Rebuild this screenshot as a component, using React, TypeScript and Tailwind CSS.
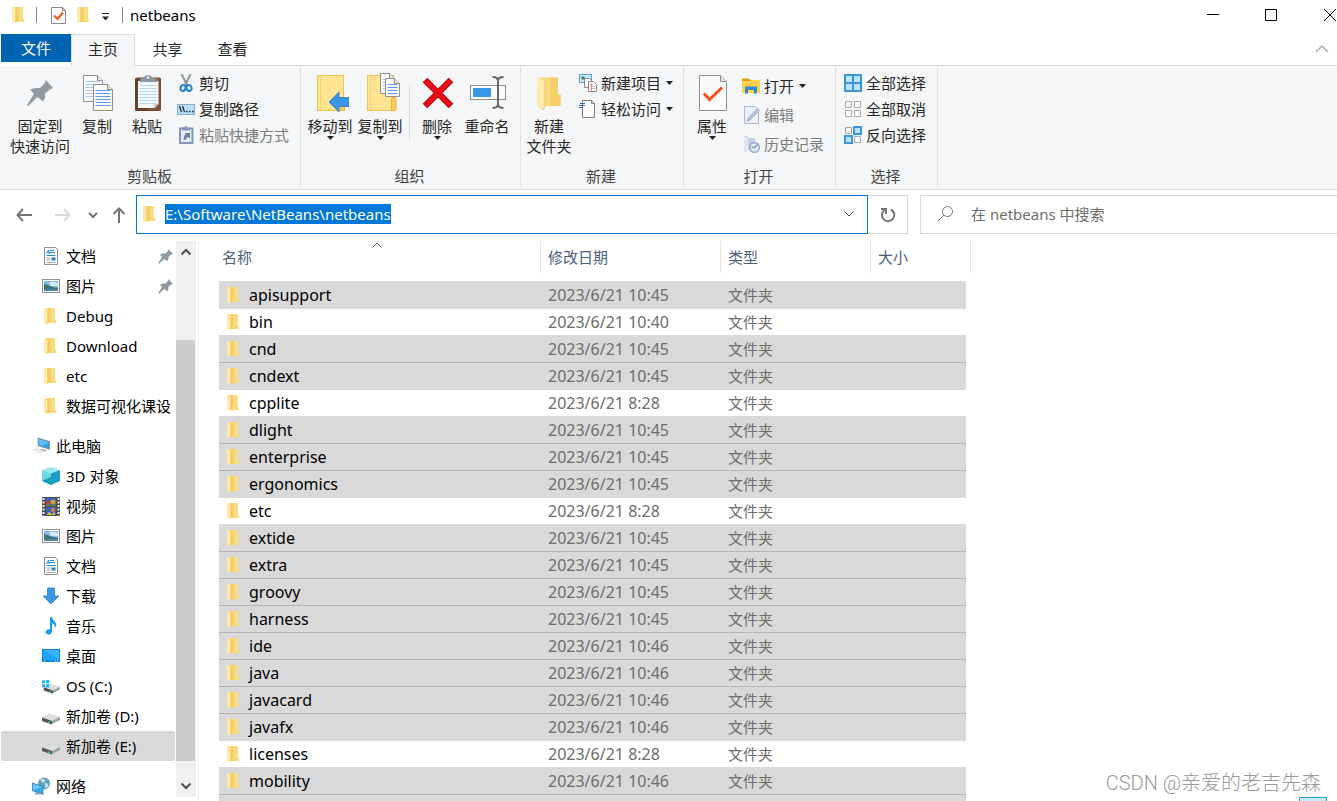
import React, { useEffect, useRef } from 'react';

type Row = { name: string; date: string; selected: boolean };
type Icon = () => React.ReactElement;

const FILES: Row[] = [
  { name: 'apisupport', date: '2023/6/21 10:45', selected: true },
  { name: 'bin', date: '2023/6/21 10:40', selected: false },
  { name: 'cnd', date: '2023/6/21 10:45', selected: true },
  { name: 'cndext', date: '2023/6/21 10:45', selected: true },
  { name: 'cpplite', date: '2023/6/21 8:28', selected: false },
  { name: 'dlight', date: '2023/6/21 10:45', selected: true },
  { name: 'enterprise', date: '2023/6/21 10:45', selected: true },
  { name: 'ergonomics', date: '2023/6/21 10:45', selected: true },
  { name: 'etc', date: '2023/6/21 8:28', selected: false },
  { name: 'extide', date: '2023/6/21 10:45', selected: true },
  { name: 'extra', date: '2023/6/21 10:45', selected: true },
  { name: 'groovy', date: '2023/6/21 10:45', selected: true },
  { name: 'harness', date: '2023/6/21 10:45', selected: true },
  { name: 'ide', date: '2023/6/21 10:46', selected: true },
  { name: 'java', date: '2023/6/21 10:46', selected: true },
  { name: 'javacard', date: '2023/6/21 10:46', selected: true },
  { name: 'javafx', date: '2023/6/21 10:46', selected: true },
  { name: 'licenses', date: '2023/6/21 8:28', selected: false },
  { name: 'mobility', date: '2023/6/21 10:46', selected: true },
];

/* ---------- small icons ---------- */

const Folder = () => (
  <svg width="14" height="18" viewBox="1 0 14 18" className="shrink-0">
    <path d="M3 1h9v12h1v3H4z" fill="#f6d06b" />
    <path d="M8 1h4v12h1v3H8z" fill="#fadc80" />
    <path d="M1 1h2l2 3v11l-1 2.500L1 16z" fill="#ffe9a9" />
    <path d="M5 4v11l-1 1" stroke="#e9c25c" fill="none" />
  </svg>
);

const CheckDoc = () => (
  <svg width="16" height="19" viewBox="0 0 16 19">
    <path d="M.5 1.500h11l3 3v13H.5z" fill="#fafafa" stroke="#8a8a8a" />
    <path d="M11.500 1.500v3h3" fill="none" stroke="#8a8a8a" />
    <path d="M3 9.500l3.500 3.500 5.500-6.500" fill="none" stroke="#f0561d" strokeWidth="2" />
  </svg>
);

const Scissors = () => (
  <svg width="18" height="18" viewBox="0 0 18 18">
    <path d="M4.500 0L10 11M13.500 0L8 11" stroke="#8f979e" strokeWidth="2" fill="none" />
    <ellipse cx="6" cy="14" rx="2.500" ry="3" transform="rotate(20 6 14)" fill="none" stroke="#1b82c8" strokeWidth="2" />
    <ellipse cx="12" cy="14" rx="2.500" ry="3" transform="rotate(-20 12 14)" fill="none" stroke="#1b82c8" strokeWidth="2" />
  </svg>
);

const CopyPath = () => (
  <svg width="18" height="18" viewBox="0 0 18 18">
    <rect x=".5" y="4.500" width="17" height="10" fill="#b5def8" stroke="#8fa9bd" />
    <path d="M2.500 6l2 6M5.500 6l2 6" stroke="#222" strokeWidth="1.200" />
    <path d="M9 11.500h1.500M12 11.500h1.500M15 11.500h1.500" stroke="#222" strokeWidth="1.500" />
  </svg>
);

const PasteShortcut = () => (
  <svg width="18" height="18" viewBox="0 0 18 18">
    <rect x="3" y="2.500" width="12.500" height="14.500" fill="#e8eefa" stroke="#8496bb" strokeWidth="2" />
    <path d="M5 1.500h8v3H5zM8 0h2v2H8z" fill="#8496bb" />
    <path d="M6.500 13.500c0-3 1-4.500 2.500-5L7.500 7H13v5.500L11.500 11C9.500 11.500 9 12.500 9 14z" fill="#6a7ea8" />
  </svg>
);

const NewItem = () => (
  <svg width="18" height="18" viewBox="0 0 18 18">
    <rect x=".5" y=".5" width="12" height="8" fill="#c9e7f8" stroke="#5f9fc4" />
    <path d="M2.500 2.500h3v3h-3z" fill="#36806f" />
    <path d="M5.500 4.500h5l2 2v7h-7z" fill="#fff" stroke="#888" />
    <path d="M9.500 7.500h5l3 3v7h-8z" fill="#fff" stroke="#888" />
    <path d="M11 10.500h3M11 12.500h5M11 14.500h5" stroke="#e3a9a2" />
    <path d="M12.500 9v8" stroke="#e88" />
  </svg>
);

const EasyAccess = () => (
  <svg width="18" height="18" viewBox="0 0 18 18">
    <path d="M3.500.5h9l3 3v14h-12z" fill="#fff" stroke="#7d7d7d" />
    <path d="M12.500.5v3h3" fill="none" stroke="#7d7d7d" />
    <path d="M1 3.500h5M0 5.500h6M0 7.500h4" stroke="#2b6aa5" />
  </svg>
);

const OpenFolder = () => (
  <svg width="18" height="18" viewBox="0 0 18 18">
    <path d="M0 1.500h7l1.500 2H17V6H0z" fill="#e09f10" />
    <path d="M0 4h8l1.500-1H18v13H0z" fill="#ffcf4f" />
    <path d="M3 16.500V9.500h12v7h-3v-3.500H6v3.500z" fill="#2f8bd9" />
  </svg>
);

const EditDoc = () => (
  <svg width="18" height="18" viewBox="0 0 18 18">
    <path d="M2.500.5h11l3 3v14h-14z" fill="#eaf0fa" stroke="#a9b8d4" />
    <path d="M15.500 2.500L17.500 4.500 8 14l-3 1.500L6.500 12z" fill="#b9c7e2" stroke="#92a5c9" strokeWidth=".800" />
  </svg>
);

const History = () => (
  <svg width="18" height="18" viewBox="0 0 18 18">
    <path d="M2 1h3l1 2h7v12H5l-3 2z" fill="#c3d0e6" />
    <path d="M2 1l4 2v12l-3 2.500-1-1z" fill="#dfe7f4" />
    <circle cx="12.500" cy="12.500" r="4.800" fill="#e6ecf7" stroke="#93a6c8" strokeWidth="1.400" />
    <path d="M12.500 12.500L15.500 9.500M12.500 12.500h-3" fill="none" stroke="#7d92b8" strokeWidth="1.500" />
  </svg>
);

const SelectAll = () => (
  <svg width="18" height="18" viewBox="0 0 18 18">
    <path d="M1 1h16v16H1z" fill="#bfe2fb" stroke="#3a96dd" strokeWidth="2" />
    <path d="M9 1v16M1 9h16" stroke="#3a96dd" strokeWidth="2" />
  </svg>
);

const SelectNone = () => (
  <svg width="18" height="18" viewBox="0 0 18 18" fill="#fafafa" stroke="#a8a8a8">
    <path d="M1.500 1.500h6v6h-6zM10.500 1.500h6v6h-6zM1.500 10.500h6v6h-6zM10.500 10.500h6v6h-6z" />
  </svg>
);

const Invert = () => (
  <svg width="18" height="18" viewBox="0 0 18 18">
    <path d="M1.500 1.500h6v6h-6zM10.500 10.500h6v6h-6z" fill="#fafafa" stroke="#a8a8a8" />
    <path d="M10 1h7v7h-7zM1 10h7v7H1z" fill="#bfe2fb" stroke="#3a96dd" strokeWidth="2" />
  </svg>
);

/* ---------- large ribbon icons ---------- */

const PIN = 'M25 6L32 14L29 15.500L24 19.500L24 24L22 27.500L16.500 23L7 32L6 31L13 20L9 15.500L14 14L19 14L23.500 9.500Z';

const PinBig = () => (
  <svg width="38" height="38" viewBox="0 0 38 38">
    <path d={PIN} fill="#929ba1" />
  </svg>
);

const SmallPin = () => (
  <svg width="15" height="15" viewBox="5 5 28 28" className="mr-0.5 ml-auto">
    <path d={PIN} fill="#8f9aa3" stroke="#8f9aa3" />
  </svg>
);

const Page = ({ x, y, w, h, line }: { x: number; y: number; w: number; h: number; line: string }) => {
  const rows = [];
  for (let ly = y + 6; ly < y + h - 2; ly += 3) rows.push(ly);
  return (
    <g>
      <path d={`M${x} ${y}h${w - 5}l5 5v${h - 5}h${-w}z`} fill="#fcfcfc" stroke="#8f8f8f" />
      <path d={`M${x + w - 5} ${y}v5h5`} fill="#e8e8e8" stroke="#8f8f8f" />
      {rows.map((ly) => (
        <path key={ly} d={`M${x + 2} ${ly}h${w - 4}`} stroke={line} />
      ))}
    </g>
  );
};

const CopyBig = () => (
  <svg width="38" height="38" viewBox="0 0 38 38">
    <Page x={5.5} y={1.5} w={19} h={26} line="#a9c8f4" />
    <Page x={15.5} y={10.5} w={19} h={26} line="#5e97ea" />
  </svg>
);

const PasteBig = () => (
  <svg width="38" height="38" viewBox="0 0 38 38">
    <rect x="7" y="3.500" width="26" height="33.500" rx="1.500" fill="#7c5135" />
    <path d="M7 5v30.500l1.500 1.500H20V5z" fill="#6a4028" />
    <path d="M10 7h20.500v23l-4 4H10z" fill="#f4f9fd" />
    {[11, 14, 17, 20, 23, 26, 29].map((y) => (
      <path key={y} d={`M11 ${y}.500h18`} stroke="#b9d9ee" />
    ))}
    <path d="M30.500 30l-4 4v-4z" fill="#b5c2cc" />
    <path d="M12 8V5l4-1.500c0-3 8-3 8 0L29 5v3z" fill="#8e979c" />
    <circle cx="20" cy="3.500" r="1.500" fill="#d5dadd" />
  </svg>
);

const MoveTo = () => (
  <svg width="38" height="38" viewBox="0 0 38 38">
    <rect x="6.500" y="1.500" width="26" height="35" fill="#ffe391" stroke="#eac54f" />
    <path d="M9.500 2v34" stroke="#f5d475" />
    <path d="M29.500 25h4v11.500h-4z" fill="#f8cf5a" stroke="#e2b53c" />
    <path d="M18 28l10-10v5.500h10v9H28V38z" fill="#3a96e4" stroke="#2b7cc4" strokeWidth=".800" />
  </svg>
);

const CopyTo = () => (
  <svg width="38" height="38" viewBox="0 0 38 38" className="overflow-visible">
    <rect x="6.500" y="1.500" width="26" height="35" fill="#ffe391" stroke="#eac54f" />
    <path d="M9.500 2v34" stroke="#f5d475" />
    <rect x="30.500" y="23.500" width="4.500" height="13" rx="1.500" fill="#f8cf5a" stroke="#e2b53c" />
    <Page x={19.5} y={-0.5} w={14} h={20} line="#a9c8f4" />
    <Page x={24.5} y={4.5} w={14} h={18} line="#5e97ea" />
  </svg>
);

const Delete = () => (
  <svg width="38" height="38" viewBox="0 0 38 38">
    <path d="M7 6l26 26M33 6L7 32" stroke="#b5000b" strokeWidth="6.500" />
    <path d="M7.500 6.500l25 25M32.500 6.500l-25 25" stroke="#e80c16" strokeWidth="5" />
  </svg>
);

const Rename = () => (
  <svg width="38" height="38" viewBox="0 0 38 38">
    <rect x="2.500" y="11.500" width="35" height="14" fill="#fcfcfc" stroke="#8d8d8d" />
    <rect x="5" y="14" width="18" height="9" fill="#3699ea" />
    <path d="M24.500 3c3.500 0 5.500 1 5.500 4 0-3 2-4 5.500-4M24.500 34c3.500 0 5.500-1 5.500-4 0 3 2 4 5.500 4M30 5v27" fill="none" stroke="#686868" strokeWidth="2" />
  </svg>
);

const NewFolder = () => (
  <svg width="38" height="38" viewBox="0 0 38 38">
    <path d="M9 3.500h19v17h2.500V32H13z" fill="#f9d979" />
    <path d="M20 3.500h8v17h2.500V32H20z" fill="#f6cf68" />
    <path d="M7 4l2-.5 6 4.500v25l-2 4-6-4.500z" fill="#ffeab0" />
    <path d="M15 8v24l-2 4" fill="none" stroke="#ecc765" />
  </svg>
);

const Properties = () => (
  <svg width="38" height="38" viewBox="0 0 38 38">
    <path d="M6.500 1.500h21l6 6v29h-27z" fill="#fafafa" stroke="#8f8f8f" />
    <path d="M27.500 1.500v6h6" fill="#e6e6e6" stroke="#8f8f8f" />
    <path d="M11 19.500l5.500 6 12.500-12" fill="none" stroke="#f4511e" strokeWidth="3" />
  </svg>
);

/* ---------- navigation icons ---------- */

const Doc = () => (
  <svg width="18" height="18" viewBox="0 0 18 18">
    <path d="M2.500.5h11l2 2v15h-13z" fill="#fcfcfc" stroke="#8d8d8d" />
    <path d="M8 3.500h4M7 5.500h6M4.500 8.500h9" stroke="#1a8fd6" />
    <path d="M4.500 7l2-4 .5 4" stroke="#1a8fd6" fill="none" />
    <path d="M4.500 11h4M4.500 13h4M4.500 15.500h9" stroke="#a5a5a5" />
    <path d="M9.500 10.500h4v3h-4z" fill="#2f7fb8" />
  </svg>
);

const Picture = () => (
  <svg width="18" height="18" viewBox="0 0 18 18">
    <rect x=".5" y="2.500" width="17" height="13" fill="#fff" stroke="#8f8f8f" />
    <path d="M2 4h14v10H2z" fill="#7db8ea" />
    <path d="M7 6c2-2 5-1 9 0v3H9z" fill="#d5e9f8" />
    <path d="M2 7c3 0 5 3 14 4v3H2z" fill="#3e7274" />
    <path d="M2 12h14v2H2z" fill="#53879f" />
  </svg>
);

const Computer = () => (
  <svg width="19" height="18" viewBox="0 0 19 18">
    <path d="M6 0l13 4v9L6 9z" fill="#7b8a96" />
    <path d="M7 1.500L18 5v6.500L7 8z" fill="#2ea3ee" />
    <path d="M7 1.500L18 5l-8 4-3-1z" fill="#5fbdf7" />
    <path d="M0 13l5-1.500 9 3L9 17z" fill="#cfd4d9" />
    <path d="M2 13l9 3M4 12.500l8 2.500" stroke="#f4f5f6" />
    <path d="M11 12l5 1.500-2 1-5-1.500z" fill="#a3acb4" />
  </svg>
);

const Cube = () => (
  <svg width="18" height="18" viewBox="0 0 18 18">
    <path d="M0 3l9-3 9 3-9 4z" fill="#9be4ee" />
    <path d="M0 3l9 3.500V18l-9-4z" fill="#6fd6e2" />
    <path d="M18 3L9 6.500V18l9-4z" fill="#1d9cc4" />
    <path d="M0 14l9-4v8z" fill="#179fb5" />
  </svg>
);

const Video = () => (
  <svg width="18" height="19" viewBox="0 0 18 19">
    <path d="M0 0h18v19H0z" fill="#4b4b4b" />
    <path d="M1.500 1v18M16.500 1v18" stroke="#f2f2f2" strokeWidth="2" strokeDasharray="2 1.500" />
    <path d="M4 1h10v8H4zM4 10h10v8H4z" fill="#3a62bd" />
    <circle cx="6" cy="6" r="2" fill="#d6442c" />
    <circle cx="11" cy="5" r="2.500" fill="#caa52b" />
    <path d="M4 8h10v1H4z" fill="#4f8b33" />
    <circle cx="11" cy="13" r="2" fill="#e07a2c" />
    <path d="M5 17l2-2 3 2 3-2v3H5z" fill="#d8bc33" />
  </svg>
);

const Download = () => (
  <svg width="18" height="18" viewBox="0 0 18 18">
    <path d="M5.500 1h7v8H17l-8 8-8-8h4.500z" fill="#3a95e3" stroke="#2f80c6" strokeWidth=".800" />
  </svg>
);

const Music = () => (
  <svg width="18" height="18" viewBox="0 0 18 18">
    <path d="M8 0h2c0 4 5 4 4 9-.5 1-1 1.500-1.500 2 1-3-1-4.500-2.500-5v8c0 5-7 4-6.500 1C4 12.500 6.500 12 8 12.500z" fill="#109cef" />
  </svg>
);

const Desktop = () => (
  <svg width="18" height="18" viewBox="0 0 18 18">
    <path d="M0 2h18v13H0z" fill="#0f86dc" />
    <path d="M1 3h16v10z" fill="#37b3ff" />
    <path d="M1 3v10h16z" fill="#1fa3fb" />
    <path d="M2 14h1M13 14h1M15 14h1" stroke="#fff" />
  </svg>
);

const Disk = () => (
  <svg width="18" height="18" viewBox="0 0 18 18">
    <path d="M0 11l7-4 11 3v3l-8 4L0 14z" fill="#9ea1a3" />
    <path d="M0 10.500L8 7l10 3-8 4z" fill="#dcdee0" />
    <path d="M0 10.500l10 3.500v3.500L0 14z" fill="#53585b" />
    <path d="M7 14.500v1.500" stroke="#3bd43b" strokeWidth="2" />
  </svg>
);

const SystemDisk = () => (
  <svg width="20" height="18" viewBox="0 0 20 18">
    <path d="M2 11l7-4 11 3v3l-8 4-10-3z" fill="#9ea1a3" />
    <path d="M2 10.500L10 7l10 3-8 4z" fill="#dcdee0" />
    <path d="M2 10.500l10 3.500v3.500L2 14z" fill="#53585b" />
    <path d="M9 14.500v1.500" stroke="#3bd43b" strokeWidth="2" />
    <path d="M0 3l3.500-.5v3.500H0zM4.500 2.500L8 2v4H4.500zM0 7h3.500v3.500L0 10zM4.500 7H8v4l-3.500-.5z" fill="#12b5ee" />
  </svg>
);

const Network = () => (
  <svg width="18" height="18" viewBox="0 0 18 18">
    <circle cx="12" cy="6.500" r="6" fill="#5f9fc3" />
    <path d="M8 3c2-2 4-1 5 0s-1 3-2 3zM13 6c3 0 4 1 3 4l-3 1z" fill="#bfe0ea" />
    <path d="M0 6l11 3.500v8L0 13.500z" fill="#36a9ee" stroke="#4a7898" strokeWidth=".800" />
    <path d="M1 7l9 3-9 3z" fill="#74caf8" />
    <path d="M3 15.500l5 2-2 .5-4-1.500z" fill="#8a949c" />
  </svg>
);

/* ---------- building blocks ---------- */

const Caret = () => (
  <svg width="7" height="4" viewBox="0 0 7 4">
    <path d="M0 0h7L3.500 4z" fill="#222" />
  </svg>
);

const Chevron = ({ up, color, width = 2 }: { up?: boolean; color: string; width?: number }) => (
  <svg width="12" height="8" viewBox="0 0 12 8" fill="none" stroke={color} strokeWidth={width}>
    {up ? <path d="M1.500 6.500L6 2l4.500 4.500" /> : <path d="M1.500 1.500L6 6l4.500-4.500" />}
  </svg>
);

function BigButton({ icon: I, lines, caret, wide }: { icon: Icon; lines: string[]; caret?: boolean; wide?: boolean }) {
  return (
    <button className={`${wide ? 'w-16' : 'w-[50px]'} flex flex-col items-center pt-2 leading-5 whitespace-nowrap`}>
      <I />
      <span className="mt-1">{lines[0]}</span>
      {lines[1] && <span>{lines[1]}</span>}
      {caret && <Caret />}
    </button>
  );
}

function SmallButton({ icon: I, label, caret, disabled, tall }: { icon: Icon; label: string; caret?: boolean; disabled?: boolean; tall?: boolean }) {
  return (
    <button disabled={disabled} className={`${tall ? 'h-[29px]' : 'h-[26px]'} flex items-center gap-1 whitespace-nowrap disabled:text-[#7b7b7b]`}>
      <I />
      <span className="pr-px">{label}</span>
      {caret && <Caret />}
    </button>
  );
}

function Group({ label, width, children }: { label: string; width: string; children: React.ReactNode }) {
  return (
    <section className={`${width} flex shrink-0 flex-col pb-0.5`}>
      <div className="flex flex-1 flex-col border-r border-[#e0e1e3]">
        <div className="flex flex-1">{children}</div>
        <h2 className="pr-0.5 pb-px text-center leading-5 text-[#444]">{label}</h2>
      </div>
    </section>
  );
}

type NavEntry = { label: string; icon: Icon; pinned?: boolean; root?: boolean; active?: boolean };

const NAV: NavEntry[] = [
  { label: '文档', icon: Doc, pinned: true },
  { label: '图片', icon: Picture, pinned: true },
  { label: 'Debug', icon: Folder },
  { label: 'Download', icon: Folder },
  { label: 'etc', icon: Folder },
  { label: '数据可视化课设', icon: Folder },
  { label: '此电脑', icon: Computer, root: true },
  { label: '3D 对象', icon: Cube },
  { label: '视频', icon: Video },
  { label: '图片', icon: Picture },
  { label: '文档', icon: Doc },
  { label: '下载', icon: Download },
  { label: '音乐', icon: Music },
  { label: '桌面', icon: Desktop },
  { label: 'OS (C:)', icon: SystemDisk },
  { label: '新加卷 (D:)', icon: Disk },
  { label: '新加卷 (E:)', icon: Disk, active: true },
  { label: '网络', icon: Network, root: true },
];

function TitleBar() {
  return (
    <header className="flex h-[34px] shrink-0 items-center pb-1">
      <div className="flex items-center pl-[11px]">
        <Folder />
        <span className="ml-2.5 h-4 w-px bg-[#8a8a8a]" />
        <button aria-label="属性" className="ml-3.5"><CheckDoc /></button>
        <button aria-label="新建文件夹" className="ml-2.5"><Folder /></button>
        <button aria-label="自定义快速访问工具栏" className="ml-2.5 pt-1">
          <svg width="9" height="8" viewBox="0 0 9 8">
            <path d="M1 .5h7" stroke="#222" />
            <path d="M1 3.500h7L4.500 7.500z" fill="#222" />
          </svg>
        </button>
        <span className="ml-3 h-4 w-px bg-[#8a8a8a]" />
        <h1 className="ml-[7px] leading-5 text-black">netbeans</h1>
      </div>
      <div className="ml-auto flex h-full">
        <button aria-label="最小化" className="flex w-[58px] items-center justify-center">
          <svg width="12" height="12" viewBox="0 0 12 12"><path d="M0 5.500h12" stroke="#000" /></svg>
        </button>
        <button aria-label="最大化" className="flex w-[58px] items-center justify-center">
          <svg width="12" height="12" viewBox="0 0 12 12"><path d="M.5.5h11v11H.5z" stroke="#000" fill="none" /></svg>
        </button>
        <button aria-label="关闭" className="flex w-[37px] items-center justify-end">
          <svg width="13" height="12" viewBox="0 0 13 12"><path d="M0 0l12 12M12 0L0 12" stroke="#000" fill="none" /></svg>
        </button>
      </div>
    </header>
  );
}

function Tabs() {
  return (
    <nav className="flex h-8 shrink-0 items-stretch">
      <button className="mb-1 w-[70px] bg-[#0063b1] text-white">文件</button>
      <button className="-mb-px w-16 border border-b-0 border-[#dadbdc] bg-[#f5f6f7] pb-1">主页</button>
      <div className="flex flex-1 border-b border-[#dadbdc]">
        <button className="w-[65px] pb-0.5">共享</button>
        <button className="w-[65px] pb-0.5">查看</button>
        <button aria-label="最小化功能区" className="mr-2 ml-auto pb-0.5">
          <svg width="14" height="9" viewBox="0 0 14 9" fill="none" stroke="#aaa" strokeWidth="1.500"><path d="M1 8l6-6 6 6" /></svg>
        </button>
      </div>
    </nav>
  );
}

function Ribbon() {
  return (
    <div className="-ml-px flex h-[124px] shrink-0 overflow-hidden border-b border-[#dadbdc] bg-[#f5f6f7] pl-px">
      <Group label="剪贴板" width="w-[300px]">
        <div className="flex pl-[7px]">
          <BigButton icon={PinBig} lines={['固定到', '快速访问']} wide />
          <BigButton icon={CopyBig} lines={['复制']} />
          <BigButton icon={PasteBig} lines={['粘贴']} />
        </div>
        <div className="flex flex-col pt-1 pl-[5px]">
          <SmallButton icon={Scissors} label="剪切" />
          <SmallButton icon={CopyPath} label="复制路径" />
          <SmallButton icon={PasteShortcut} label="粘贴快捷方式" disabled />
        </div>
      </Group>
      <Group label="组织" width="w-[220px]">
        <div className="flex pl-1">
          <BigButton icon={MoveTo} lines={['移动到']} caret />
          <BigButton icon={CopyTo} lines={['复制到']} caret />
          <span className="mt-5 mr-0.5 ml-1 h-[55px] w-px bg-[#dcdddf]" />
          <BigButton icon={Delete} lines={['删除']} caret />
          <BigButton icon={Rename} lines={['重命名']} />
        </div>
      </Group>
      <Group label="新建" width="w-[163px]">
        <div className="flex pl-[3px]">
          <BigButton icon={NewFolder} lines={['新建', '文件夹']} />
        </div>
        <div className="flex flex-col pt-1 pl-[5px]">
          <SmallButton icon={NewItem} label="新建项目" caret />
          <SmallButton icon={EasyAccess} label="轻松访问" caret />
        </div>
      </Group>
      <Group label="打开" width="w-[152px]">
        <div className="flex pl-[3px]">
          <BigButton icon={Properties} lines={['属性']} caret />
        </div>
        <div className="flex flex-col pt-[5px] pl-[5px]">
          <SmallButton icon={OpenFolder} label="打开" caret tall />
          <SmallButton icon={EditDoc} label="编辑" disabled tall />
          <SmallButton icon={History} label="历史记录" disabled tall />
        </div>
      </Group>
      <Group label="选择" width="w-[102px]">
        <div className="flex flex-col pt-1 pl-2">
          <SmallButton icon={SelectAll} label="全部选择" />
          <SmallButton icon={SelectNone} label="全部取消" />
          <SmallButton icon={Invert} label="反向选择" />
        </div>
      </Group>
    </div>
  );
}

function AddressRow() {
  const path = useRef<HTMLInputElement>(null);

  useEffect(() => {
    path.current?.focus();
    path.current?.select();
  }, []);

  return (
    <div className="mt-[5px] flex h-[39px] shrink-0">
      <div className="flex w-[135px] items-center pl-[15px]">
        <button aria-label="后退">
          <svg width="16" height="14" viewBox="0 0 16 14" fill="none" stroke="#737373" strokeWidth="2"><path d="M16 7H1.500M7 1L1.500 7 7 13" /></svg>
        </button>
        <button aria-label="前进" className="ml-[23px]">
          <svg width="16" height="14" viewBox="0 0 16 14" fill="none" stroke="#dadada" strokeWidth="2"><path d="M0 7h14.500M9 1l5.500 6L9 13" /></svg>
        </button>
        <button aria-label="最近浏览的位置" className="ml-[17px]">
          <svg width="10" height="8" viewBox="0 0 10 8" fill="none" stroke="#737373" strokeWidth="2"><path d="M1 2l4 4 4-4" /></svg>
        </button>
        <button aria-label="向上" className="ml-3.5">
          <svg width="14" height="16" viewBox="0 0 14 16" fill="none" stroke="#737373" strokeWidth="2"><path d="M7 16V1.500M1.500 7L7 1.500 12.500 7" /></svg>
        </button>
      </div>
      <div className="flex min-w-0 flex-1 items-center border border-[#0078d7] bg-white pb-0.5 pl-1.5">
        <Folder />
        <input
          ref={path}
          aria-label="地址"
          defaultValue="E:\Software\NetBeans\netbeans"
          className="ml-2 h-5 min-w-0 flex-1 leading-5 text-black caret-transparent outline-none selection:bg-[#0078d7] selection:text-white"
        />
        <button aria-label="以前的位置" className="mr-3"><Chevron color="#444" width={1} /></button>
      </div>
      <button aria-label="刷新" className="flex w-10 items-center justify-center border border-l-0 border-[#d9d9d9]">
        <svg width="16" height="16" viewBox="0 0 16 16" fill="none" stroke="#757575" strokeWidth="2">
          <path d="M11 2.500A6.200 6.200 0 1 1 4.500 3M1 2h5v5" />
        </svg>
      </button>
      <div className="ml-3 flex w-[417px] items-center border border-r-0 border-[#d9d9d9] pb-0.5 pl-4">
        <svg width="17" height="17" viewBox="0 0 17 17" fill="none" stroke="#757575">
          <circle cx="10.500" cy="6.500" r="5" />
          <path d="M7 10l-6 6" />
        </svg>
        <input aria-label="搜索" placeholder="在 netbeans 中搜索" className="ml-[17px] h-5 min-w-0 flex-1 outline-none placeholder:text-[#6d6d6d]" />
      </div>
    </div>
  );
}

function Navigation() {
  return (
    <aside className="flex w-[198px] shrink-0 border-r border-[#f0f0f0]">
      <ul className="w-[174px]">
        {NAV.map((n, i) => (
          <li key={i} className={n.root ? 'pt-2.5' : ''}>
            <button className={`flex h-[30px] w-full items-center gap-1.5 text-left whitespace-nowrap text-black ${n.root ? 'pl-[31px]' : 'pl-[41px]'} ${n.active ? 'bg-[#d9d9d9]' : ''}`}>
              <span className="flex w-[18px] shrink-0 justify-center"><n.icon /></span>
              <span>{n.label}</span>
              {n.pinned && <SmallPin />}
            </button>
          </li>
        ))}
      </ul>
      <div className="mb-1 ml-px flex w-5 flex-col bg-[#f0f0f0]">
        <button aria-label="向上滚动" className="flex h-[22px] items-center justify-center"><Chevron up color="#505050" /></button>
        <div className="mt-[77px] mr-px flex-1 bg-[#cdcdcd]" />
        <button aria-label="向下滚动" className="mt-[14px] flex h-[22px] items-center justify-center"><Chevron color="#505050" /></button>
      </div>
    </aside>
  );
}

function rowStyle(row: Row, prev?: Row) {
  if (row.selected && prev?.selected) return 'bg-[#d9d9d9] border-[#b5b5b5]';
  if (row.selected) return 'bg-[#d9d9d9] border-[#d9d9d9]';
  return 'border-[#d9d9d9]';
}

function FileList() {
  return (
    <main className="min-w-0 flex-1 overflow-hidden pl-5">
      <table className="w-[752px] table-fixed border-separate border-spacing-0 text-left">
        <colgroup>
          <col className="w-[322px]" />
          <col className="w-[180px]" />
          <col className="w-[150px]" />
          <col className="w-[95px]" />
          <col className="w-[5px]" />
        </colgroup>
        <thead className="text-[#4c607a]">
          <tr className="h-8">
            <th className="relative border-r border-[#e5e5e5] pl-[3px] font-normal">
              名称
              <span className="absolute top-0 left-[152px] flex"><Chevron up color="#666" width={1} /></span>
            </th>
            <th className="border-r border-[#e5e5e5] pl-[7px] font-normal">修改日期</th>
            <th className="border-r border-[#e5e5e5] pl-[7px] font-normal">类型</th>
            <th className="pl-[7px] font-normal">大小</th>
            <th className="border-r border-[#e5e5e5]" />
          </tr>
          <tr className="h-2"><td colSpan={5} /></tr>
        </thead>
        <tbody className="text-[#6d6d6d]">
          {FILES.map((f, i) => {
            const cell = `h-[27px] border-t ${rowStyle(f, FILES[i - 1])}`;
            return (
              <tr key={f.name}>
                <td className={cell}>
                  <div className="flex h-[26px] items-center gap-2 pl-2 text-base leading-5 text-black">
                    <Folder />
                    <span>{f.name}</span>
                  </div>
                </td>
                <td className={`${cell} pl-[7px] text-base leading-5`}>{f.date}</td>
                <td className={`${cell} pl-[7px]`}>文件夹</td>
                <td className={cell} />
                <td />
              </tr>
            );
          })}
          <tr>
            <td colSpan={4} className="h-[27px] border-t border-[#b5b5b5] bg-[#d9d9d9]" />
            <td />
          </tr>
        </tbody>
      </table>
    </main>
  );
}

export default function App() {
  return (
    <div className="relative flex h-screen flex-col overflow-hidden bg-white pl-px font-['Noto_Sans','Noto_Sans_CJK_SC',sans-serif] text-[15px] leading-5 text-[#262626]">
      <TitleBar />
      <Tabs />
      <Ribbon />
      <AddressRow />
      <div className="mt-[7px] flex min-h-0 flex-1">
        <Navigation />
        <FileList />
      </div>
      <div className="absolute right-4 bottom-1 font-['Roboto','Noto_Sans_CJK_SC',sans-serif] text-xl leading-7 font-light text-[#999]">CSDN @亲爱的老吉先森</div>
      <span className="absolute right-2.5 bottom-0 h-1 w-7 border border-b-0 border-[#26a0da] bg-[#cbe8f6]" />
    </div>
  );
}
